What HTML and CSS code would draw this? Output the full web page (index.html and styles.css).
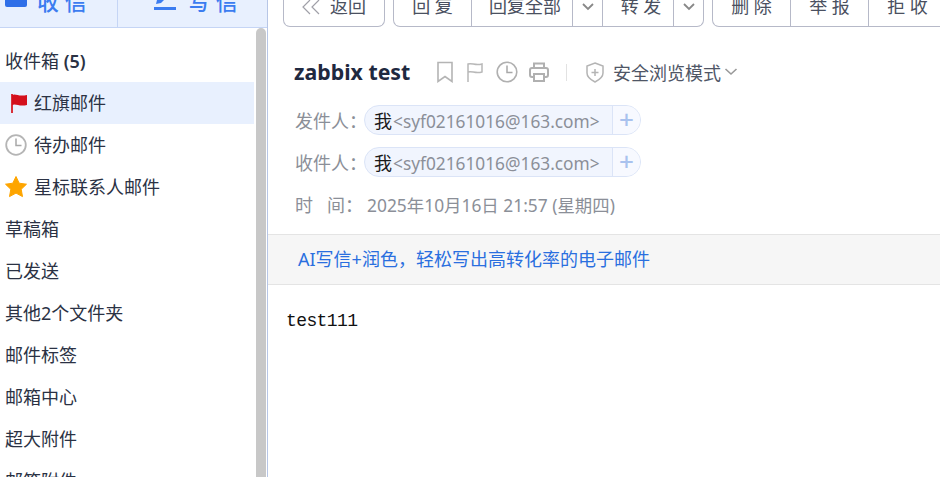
FILE: index.html
```html
<!DOCTYPE html>
<html lang="en">
<head>
    <meta charset="UTF-8">
    <meta name="viewport" content="width=device-width, initial-scale=1.0">
    <title>zabbix test</title>
    <link rel="stylesheet" href="styles.css">
</head>
<body>
    <div class="page">
        <div class="sidebar">
            <div class="tabs">
                <a class="tab tab-receive">
                    <span class="envelope"></span>
                    <span>收 信</span>
                </a>
                <a class="tab tab-write">
                    <svg class="tab-icon" width="22" height="22" viewBox="0 0 22 22"><path d="M3 12 L14 0 L18 4 L7 15 L2 16 Z" fill="#3b7cf0"/><rect x="0" y="19" width="22" height="3" fill="#3b7cf0"/></svg>
                    <span>写 信</span>
                </a>
            </div>
            <div class="side-body">
                <div class="folders">
                    <div class="folder"><span>收件箱 <b>(5)</b></span></div>
                    <div class="folder folder-icon active">
                        <svg class="flag-icon" width="18" height="21" viewBox="0 0 18 21"><path d="M1 1 H3 V20 H1 Z" fill="#d8303a"/><path d="M2 2 C6 0 8 4 17 2 V12 C9 14 6 10 2 12 Z" fill="#d40f1c"/></svg>
                        <span>红旗邮件</span>
                    </div>
                    <div class="folder folder-icon">
                        <svg width="22" height="22" viewBox="0 0 22 22"><circle cx="11" cy="11" r="9.8" fill="#fff" stroke="#b5b5b5" stroke-width="1.8"/><path d="M11 4.5 V11.5 H16.5" fill="none" stroke="#a8a8a8" stroke-width="1.5"/></svg>
                        <span>待办邮件</span>
                    </div>
                    <div class="folder folder-icon">
                        <svg width="22" height="22" viewBox="0 0 22 22"><path d="M11 0.5 L14.2 7.2 L21.5 8.2 L16.2 13.3 L17.5 20.6 L11 17.1 L4.5 20.6 L5.8 13.3 L0.5 8.2 L7.8 7.2 Z" fill="#fea500" stroke="#fea500" stroke-linejoin="round"/></svg>
                        <span>星标联系人邮件</span>
                    </div>
                    <div class="folder"><span>草稿箱</span></div>
                    <div class="folder"><span>已发送</span></div>
                    <div class="folder"><span>其他2个文件夹</span></div>
                    <div class="folder"><span>邮件标签</span></div>
                    <div class="folder"><span>邮箱中心</span></div>
                    <div class="folder"><span>超大附件</span></div>
                    <div class="folder"><span>邮箱附件</span></div>
                </div>
                <div class="thumb"></div>
            </div>
        </div>

        <div class="main">
            <div class="toolbar">
                <div class="btn-group"><a class="btn btn-back"><svg width="18" height="16" viewBox="0 0 18 16"><path d="M8 1 L1 8 L8 15 M17 1 L10 8 L17 15" fill="none" stroke="#a0a0a8" stroke-width="1.2"/></svg><span>返回</span></a></div>
                <div class="btn-group">
                    <a class="btn w78">回 复</a>
                    <a class="btn w101">回复全部</a>
                    <a class="btn caret"><svg width="14" height="8" viewBox="0 0 14 8"><path d="M2 1 L7 6 L12 1" fill="none" stroke="#888" stroke-width="1.8"/></svg></a>
                    <a class="btn w71">转 发</a>
                    <a class="btn caret"><svg width="14" height="8" viewBox="0 0 14 8"><path d="M2 1 L7 6 L12 1" fill="none" stroke="#888" stroke-width="1.8"/></svg></a>
                </div>
                <div class="btn-group">
                    <a class="btn w78">删 除</a>
                    <a class="btn w78">举 报</a>
                    <a class="btn w78">拒 收</a>
                </div>
            </div>

            <div class="subject-row">
                <h1 class="subject">zabbix test</h1>
                <div class="subject-icons">
                    <svg width="18" height="22" viewBox="0 0 18 22"><path d="M2 1.5 H16 V20.5 L9 15.5 L2 20.5 Z" fill="none" stroke="#b4b4b4" stroke-width="1.6"/></svg>
                    <svg width="18" height="20" viewBox="0 0 18 20"><path d="M2 20 V2 C6 0.5 9 4 16 2 V10 C9 12 6 8.5 2 10" fill="none" stroke="#b8b8b8" stroke-width="1.5"/></svg>
                    <svg width="22" height="22" viewBox="0 0 22 22"><circle cx="11" cy="11" r="9.8" fill="none" stroke="#b0b0b0" stroke-width="1.6"/><path d="M11 4.5 V11.5 H16.5" fill="none" stroke="#a8a8a8" stroke-width="1.5"/></svg>
                    <svg class="print-icon" width="20" height="20" viewBox="0 0 20 20"><path d="M5 6 V1.5 H15 V6" fill="none" stroke="#b0b0b0" stroke-width="2"/><rect x="1" y="6" width="18" height="9" rx="2" fill="none" stroke="#b0b0b0" stroke-width="2"/><rect x="5" y="12" width="10" height="7" fill="#fff" stroke="#b0b0b0" stroke-width="2"/></svg>
                </div>
                <div class="sep"></div>
                <div class="safe-mode">
                    <svg width="18" height="21" viewBox="0 0 18 21"><path d="M9 1 L17 4 V11 C17 15 13 18 9 20 C5 18 1 15 1 11 V4 Z" fill="none" stroke="#b4b4b4" stroke-width="1.5"/><path d="M9 7 V14 M5.5 10.5 H12.5" stroke="#b4b4b4" stroke-width="1.5"/></svg>
                    <span>安全浏览模式</span>
                    <svg width="14" height="8" viewBox="0 0 14 8"><path d="M1.5 1 L7 6 L12.5 1" fill="none" stroke="#999" stroke-width="1.6"/></svg>
                </div>
            </div>

            <div class="meta">
                <div class="meta-row">
                    <span class="meta-label">发件人：</span>
                    <div class="chip"><span class="chip-name"><b>我</b>&lt;syf02161016@163.com&gt;</span><span class="chip-add">+</span></div>
                </div>
                <div class="meta-row">
                    <span class="meta-label">收件人：</span>
                    <div class="chip"><span class="chip-name"><b>我</b>&lt;syf02161016@163.com&gt;</span><span class="chip-add">+</span></div>
                </div>
                <div class="meta-row time-row">
                    <span class="meta-label">时&nbsp;&nbsp;&nbsp;间：</span>
                    <span class="time-text">2025年10月16日 21:57 (星期四)</span>
                </div>
            </div>

            <div class="banner">AI写信+润色，轻松写出高转化率的电子邮件</div>

            <div class="mail-body">test111</div>
        </div>
    </div>
</body>
</html>
```

FILE: styles.css
```css
html, body { margin: 0; height: 100%; overflow: hidden; background: #fff; }
body { font-family: "Noto Sans", "Noto Sans CJK SC", sans-serif; color: #2b3244; }
svg { display: block; flex: none; }
a { display: block; }
.page { display: flex; height: 477px; overflow: hidden; }

.sidebar { width: 267px; flex: none; border-right: 1px solid #b7c6e6; display: flex; flex-direction: column; }
.tabs { display: flex; height: 27px; flex: none; overflow: hidden; align-items: flex-end; background: #e8f0fe; border-bottom: 1px solid #c5d5f5; }
.tab { height: 52px; display: flex; align-items: center; flex: none; color: #3b7cf0; font-size: 22px; font-weight: 500; line-height: 52px; box-sizing: border-box; }
.tab-receive { width: 118px; padding-left: 5px; gap: 10px; border-right: 1px solid #c5d5f5; }
.tab-write { flex: 1; padding-left: 36px; gap: 12px; }
.tab-icon { margin-top: -4px; }
.envelope { width: 22px; height: 24px; flex: none; align-self: flex-end; margin-bottom: 20px; background: #2f6fe8; border-radius: 0 0 2px 2px; }

.side-body { flex: 1; display: flex; min-height: 0; gap: 2px; }
.folders { width: 254px; padding-top: 12px; overflow: hidden; font-size: 18px; }
.folder { height: 42px; display: flex; align-items: center; padding-left: 5px; box-sizing: border-box; white-space: nowrap; }
.folder span { margin-bottom: 2px; }
.folder b { font-weight: 600; }
.folder-icon { padding-left: 0; }
.folder-icon svg { margin-left: 5px; margin-right: 7px; }
.folder-icon .flag-icon { margin-left: 10px; margin-right: 6px; }
.active { background: #e8f0fe; }
.thumb { width: 10px; background: #c8c8c8; border-radius: 5px 5px 0 0; }

.main { flex: 1; min-width: 0; }
.toolbar { display: flex; height: 27px; overflow: hidden; align-items: flex-end; gap: 8px; padding-left: 15px; }
.btn-group { display: flex; flex: none; height: 40px; border: 1px solid #b6b9c8; border-top: 0; border-radius: 0 0 7px 7px; box-sizing: border-box; }
.btn { height: 39px; line-height: 39px; text-align: center; font-size: 18px; color: #4a5060; box-sizing: border-box; border-left: 1px solid #b6b9c8; flex: none; }
.btn:first-child { border-left: 0; }
.btn-back { width: 100px; display: flex; align-items: center; justify-content: center; gap: 10px; }
.w78 { width: 78px; }
.w78:first-child { width: 77px; }
.w101 { width: 101px; padding-left: 6px; }
.w71 { width: 71px; padding-left: 6px; }
.caret { width: 30px; display: flex; align-items: center; justify-content: center; }

.subject-row { display: flex; align-items: center; height: 36px; margin-top: 27px; padding-left: 26px; }
.subject { margin: 0 0 1px; font-size: 21.3px; font-weight: 700; color: #1f2940; width: 142px; flex: none; line-height: 35px; }
.subject-icons { display: flex; align-items: center; gap: 12px; }
.print-icon { margin-left: -1px; }
.sep { width: 1px; height: 17px; background: #e2e2e2; margin: 0 19px 0 17px; }
.safe-mode { display: flex; align-items: center; gap: 9px; font-size: 18px; color: #4f5666; }
.safe-mode span { margin-right: -6px; }

.meta { padding-left: 27px; margin-top: 15px; }
.meta-row { display: flex; align-items: center; height: 30px; margin-bottom: 12px; }
.meta-label { width: 69px; flex: none; font-size: 18px; line-height: 30px; padding-top: 2px; color: #8b8f98; white-space: nowrap; }
.chip { display: flex; width: 277px; height: 30px; box-sizing: border-box; border: 1px solid #dbe4f7; border-radius: 15px; background: #f1f5fe; font-size: 17.3px; line-height: 30px; color: #8b8f98; overflow: hidden; }
.chip-name { width: 247px; flex: none; padding-left: 9px; box-sizing: border-box; white-space: nowrap; }
.chip-name b { font-weight: 400; font-size: 18px; color: #1a1a1a; margin-right: 1px; }
.chip-add { flex: 1; border-left: 1px solid #dbe4f7; text-align: center; font-size: 26px; line-height: 26px; font-weight: 500; color: #a9c2ee; background: #f7f9ff; }
.time-row { margin-bottom: 0; }
.time-row .meta-label { width: 72px; padding-top: 2px; }
.time-text { font-size: 17.4px; color: #8b8f98; white-space: nowrap; }

.banner { margin-top: 15px; height: 51px; line-height: 49px; box-sizing: border-box; background: #f6f6f6; border-top: 1px solid #e4e4e4; border-bottom: 1px solid #e4e4e4; padding-left: 30px; font-size: 18px; color: #2a6fdf; white-space: nowrap; }
.mail-body { padding: 25px 0 0 18px; font-family: "Liberation Mono", monospace; font-size: 18px; letter-spacing: -0.6px; line-height: 22px; color: #111; }
```
